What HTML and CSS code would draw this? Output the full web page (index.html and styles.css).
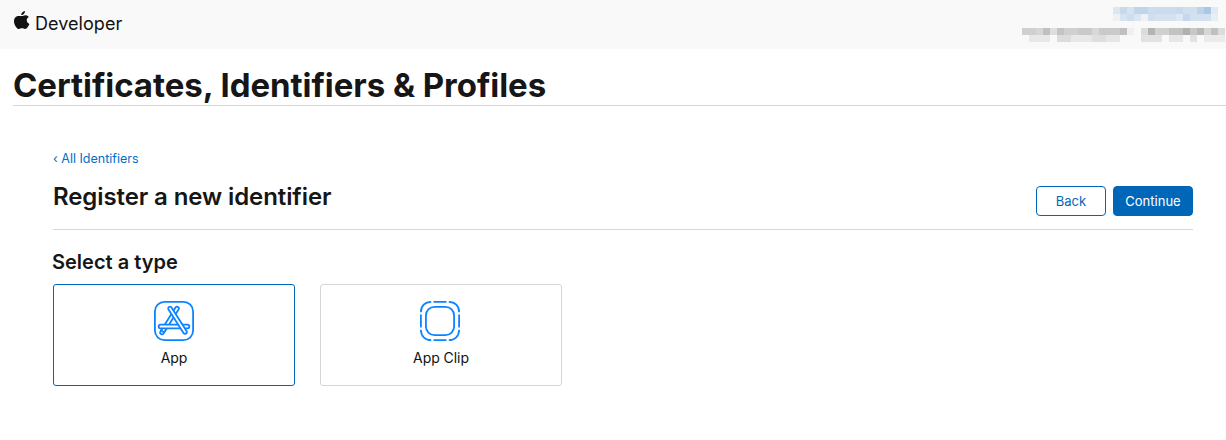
FILE: index.html
```html
<!DOCTYPE html>
<html lang="en">
<head>
<meta charset="utf-8">
<title>Register a new identifier</title>
<link rel="stylesheet" href="styles.css">
</head>
<body>
<header class="topbar">
  <a class="brand" href="#">
    <svg class="apple" viewBox="0.7 0 15 19" preserveAspectRatio="none" aria-hidden="true"><path d="M8.3 5.1C9 5.100 10 4.300 11.400 4.300c1.100 0 2.400.5 3.200 1.700-2.900 1.600-2.400 5.700.6 6.900-.4 1.100-.9 2.100-1.600 3.100-.7 1-1.500 2-2.600 2-1.100 0-1.500-.7-2.800-.7-1.400 0-1.800.7-2.900.7-1.100 0-1.900-1-2.700-2.100C1.500 14.500.7 12.300.7 10.200c0-3.400 2.200-5.200 4.400-5.200 1.200 0 2.400.1 3.200.1zM11 0c.1 1-.3 2-.9 2.700-.6.8-1.600 1.400-2.600 1.300C7.400 3 7.900 2 8.400 1.400 9 .7 10.100.1 11 0z"/></svg>
    <span class="brand-name">Developer</span>
  </a>
  <svg class="redacted" viewBox="0 0 204 49" aria-hidden="true">
    <g>
      <rect x="91" y="7" width="7" height="7" fill="#dbe7f3"/><rect x="98" y="7" width="7" height="7" fill="#c7d9ea"/><rect x="105" y="7" width="7" height="7" fill="#d5e3f1"/><rect x="112" y="7" width="14" height="7" fill="#bfd5eb"/><rect x="126" y="7" width="7" height="7" fill="#cadcee"/><rect x="133" y="7" width="21" height="7" fill="#c9dbec"/><rect x="154" y="7" width="7" height="7" fill="#c7d9ea"/><rect x="161" y="7" width="14" height="7" fill="#d0dfee"/><rect x="175" y="7" width="7" height="7" fill="#bdd3e9"/><rect x="182" y="7" width="7" height="7" fill="#a9c8e6"/><rect x="189" y="7" width="7" height="7" fill="#e2ebf4"/>
      <rect x="91" y="14" width="7" height="7" fill="#edf2f7"/><rect x="98" y="14" width="7" height="7" fill="#d6e3f0"/><rect x="105" y="14" width="7" height="7" fill="#cddeee"/><rect x="112" y="14" width="7" height="7" fill="#dbe6f1"/><rect x="119" y="14" width="7" height="7" fill="#eef2f7"/><rect x="126" y="14" width="7" height="7" fill="#cfdfee"/><rect x="133" y="14" width="21" height="7" fill="#d4e2f0"/><rect x="154" y="14" width="7" height="7" fill="#dce8f3"/><rect x="161" y="14" width="7" height="7" fill="#c3d8ec"/><rect x="168" y="14" width="21" height="7" fill="#d2e1ef"/><rect x="189" y="14" width="7" height="7" fill="#e6eef6"/>
    </g>
    <g>
      <rect x="0" y="28" width="14" height="7" fill="#d0d0d0"/><rect x="14" y="28" width="7" height="7" fill="#d6d6d6"/><rect x="21" y="28" width="7" height="7" fill="#c0c0c0"/><rect x="28" y="28" width="7" height="7" fill="#dedede"/><rect x="35" y="28" width="7" height="7" fill="#c4c4c4"/><rect x="42" y="28" width="14" height="7" fill="#d0d0d0"/><rect x="56" y="28" width="14" height="7" fill="#c9c9c9"/><rect x="70" y="28" width="7" height="7" fill="#d8d8d8"/><rect x="77" y="28" width="21" height="7" fill="#cacaca"/><rect x="98" y="28" width="7" height="7" fill="#c0c0c0"/><rect x="105" y="28" width="7" height="7" fill="#f0f0f0"/><rect x="119" y="28" width="7" height="7" fill="#dcdcdc"/><rect x="126" y="28" width="7" height="7" fill="#b4b4b4"/><rect x="133" y="28" width="14" height="7" fill="#d0d0d0"/><rect x="147" y="28" width="14" height="7" fill="#c2c2c2"/><rect x="161" y="28" width="7" height="7" fill="#b0b0b0"/><rect x="168" y="28" width="7" height="7" fill="#c8c8c8"/><rect x="175" y="28" width="7" height="7" fill="#b8b8b8"/><rect x="182" y="28" width="7" height="7" fill="#d6d6d6"/><rect x="189" y="28" width="7" height="7" fill="#c0c0c0"/><rect x="196" y="28" width="7" height="7" fill="#dcdcdc"/>
      <rect x="7" y="35" width="21" height="7" fill="#e8e8e8"/><rect x="35" y="35" width="14" height="7" fill="#dcdcdc"/><rect x="49" y="35" width="21" height="7" fill="#e8e8e8"/><rect x="70" y="35" width="14" height="7" fill="#dedede"/><rect x="84" y="35" width="14" height="7" fill="#e6e6e6"/><rect x="119" y="35" width="21" height="7" fill="#e2e2e2"/><rect x="147" y="35" width="14" height="7" fill="#e6e6e6"/><rect x="168" y="35" width="7" height="7" fill="#e2e2e2"/><rect x="182" y="35" width="21" height="7" fill="#ebebeb"/>
    </g>
  </svg>
</header>

<div class="title-bar">
  <h1 class="page-title">Certificates, Identifiers &amp; Profiles</h1>
</div>

<main class="content">
  <a class="back-link" href="#">‹ All Identifiers</a>
  <div class="section-head">
    <h2 class="section-title">Register a new identifier</h2>
    <div class="actions">
      <button class="btn btn-outline" type="button">Back</button>
      <button class="btn btn-primary" type="button">Continue</button>
    </div>
  </div>
  <h3 class="type-heading">Select a type</h3>
  <div class="type-list">
    <div class="type-card is-selected">
      <svg class="type-icon" viewBox="0 0 40 40" fill="none" aria-hidden="true">
        <rect x="0.900" y="0.900" width="38.200" height="38.200" rx="9.500"/>
        <path d="M8.200 27.500 6.500 30.500a1.800 1.800 0 0 0 3 2l3-5"/>
        <path class="knockout" d="M21.500 6.500 8 28a1.800 1.800 0 0 0 3 2L24.500 8.500a1.800 1.800 0 0 0-3-2z"/>
        <path class="knockout" d="M6.500 23.700h27a1.800 1.800 0 0 1 0 3.600h-27a1.800 1.800 0 0 1 0-3.600z"/>
        <path class="knockout" d="M17.500 6.500 32.500 30a1.800 1.800 0 0 1-3 2L14.500 8.500a1.800 1.800 0 0 1 3-2z"/>
      </svg>
      <span class="type-label">App</span>
    </div>
    <div class="type-card">
      <svg class="type-icon type-icon-clip" viewBox="0 0 40 40" fill="none" aria-hidden="true">
        <rect x="5.900" y="5.900" width="28.200" height="28.200" rx="8.500"/>
        <path d="M13.500.900h13M13.500 39.100h13M.900 13.500v13M39.100 13.500v13"/>
        <path d="M.900 11.200C.900 5 5 .900 11.200.900M28.800.900C35 .900 39.100 5 39.100 11.200M39.100 28.800C39.100 35 35 39.100 28.800 39.100M11.200 39.100C5 39.100.900 35 .900 28.800"/>
      </svg>
      <span class="type-label">App Clip</span>
    </div>
  </div>
</main>
</body>
</html>
```

FILE: styles.css
```css
* { box-sizing: border-box; }

html, body { margin: 0; padding: 0; }

body {
  background: #fff;
  color: #1d1d1f;
  font-family: Inter, "Liberation Sans", Arial, sans-serif;
  height: 440px;
  overflow: hidden;
}

.topbar {
  height: 49px;
  background: #f9f9f9;
  display: flex;
  justify-content: space-between;
  padding-left: 14px;
}

.brand {
  display: flex;
  align-items: flex-start;
  gap: 5px;
  padding-top: 11px;
  color: #111;
  text-decoration: none;
}

.apple {
  width: 16px;
  height: 19px;
  fill: #111;
}

.brand-name {
  margin-top: 1px;
  font-size: 18px;
  line-height: 24px;
  letter-spacing: 0.05px;
}

.redacted {
  width: 204px;
  height: 49px;
  display: block;
}

.title-bar {
  height: 57px;
  margin-left: 13px;
  border-bottom: 1px solid #d6d6d6;
}

.page-title {
  margin: 0;
  padding-top: 17px;
  font-size: 33px;
  line-height: 39px;
  font-weight: 700;
  letter-spacing: -0.05px;
  color: #161617;
}

.content {
  padding: 45px 33px 0 53px;
}

.back-link {
  display: block;
  font-size: 12.500px;
  line-height: 15px;
  color: #0070c9;
  text-decoration: none;
}

.section-head {
  display: flex;
  justify-content: space-between;
  align-items: flex-start;
  height: 55px;
  margin-top: 9px;
  border-bottom: 1px solid #d6d6d6;
}

.section-title {
  margin: 0;
  padding-top: 8px;
  font-size: 24px;
  line-height: 28px;
  font-weight: 600;
  letter-spacing: -0.1px;
  color: #161617;
}

.actions {
  display: flex;
  gap: 7px;
  padding-top: 11px;
}

.btn {
  height: 30px;
  border-radius: 4px;
  font-family: inherit;
  font-size: 13px;
  font-weight: 400;
  padding: 0;
}

.btn-outline {
  width: 70px;
  background: #fff;
  border: 1px solid #0067b8;
  color: #0067b8;
}

.btn-primary {
  width: 80px;
  background: #0067b8;
  border: 1px solid #0067b8;
  color: #fff;
}

.type-heading {
  margin: 20px 0 0;
  margin-left: -1px;
  font-size: 20px;
  line-height: 24px;
  font-weight: 600;
  color: #161617;
}

.type-list {
  display: flex;
  gap: 25px;
  margin-top: 10px;
}

.type-card {
  width: 242px;
  height: 102px;
  border: 1px solid #d6d6d6;
  border-radius: 3px;
  display: flex;
  flex-direction: column;
  align-items: center;
  padding-top: 16px;
}

.type-card.is-selected {
  border-color: #0067b8;
}

.type-icon {
  width: 40px;
  height: 40px;
  display: block;
  stroke: #0d84ff;
  stroke-width: 1.800;
}

.type-icon-clip {
  margin-right: 2px;
}

.knockout {
  fill: #fff;
}

.type-label {
  margin-top: 9px;
  font-size: 14px;
  line-height: 16px;
  letter-spacing: -0.05px;
  color: #111;
}
```
